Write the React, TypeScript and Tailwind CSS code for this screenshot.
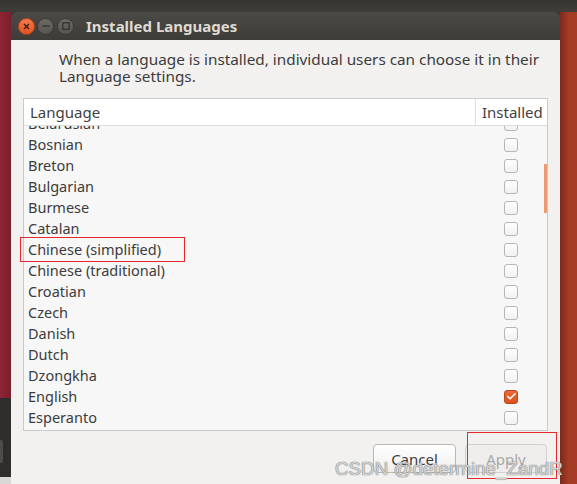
import { Check } from 'lucide-react'

const LANGUAGES: { name: string; installed: boolean }[] = [
  { name: 'Belarusian', installed: false },
  { name: 'Bosnian', installed: false },
  { name: 'Breton', installed: false },
  { name: 'Bulgarian', installed: false },
  { name: 'Burmese', installed: false },
  { name: 'Catalan', installed: false },
  { name: 'Chinese (simplified)', installed: false },
  { name: 'Chinese (traditional)', installed: false },
  { name: 'Croatian', installed: false },
  { name: 'Czech', installed: false },
  { name: 'Danish', installed: false },
  { name: 'Dutch', installed: false },
  { name: 'Dzongkha', installed: false },
  { name: 'English', installed: true },
  { name: 'Esperanto', installed: false },
  { name: 'Estonian', installed: false },
]

function CheckBox({ checked }: { checked: boolean }) {
  if (checked) {
    return (
      <span className="flex h-[14px] w-[14px] items-center justify-center rounded-[3px] border border-[#b9471c] bg-gradient-to-b from-[#ec6a37] to-[#d9511f]">
        <Check size={11} strokeWidth={3.5} className="text-white" />
      </span>
    )
  }
  return <span className="h-[14px] w-[14px] rounded-[3px] border border-[#b7b6b3] bg-gradient-to-b from-white to-[#f1f1f0]" />
}

function TitleButton({ kind }: { kind: 'close' | 'min' | 'max' }) {
  if (kind === 'close') {
    return (
      <span className="flex h-[17px] w-[17px] items-center justify-center rounded-full border border-[#b8431b] bg-gradient-to-b from-[#f47a4b] to-[#e0541f]">
        <svg width="7" height="7" viewBox="0 0 7 7">
          <path d="M1 1 L6 6 M6 1 L1 6" stroke="#3b1a0e" strokeWidth="1.3" />
        </svg>
      </span>
    )
  }
  return (
    <span className="flex h-[17px] w-[17px] items-center justify-center rounded-full border border-[#3a3935] bg-gradient-to-b from-[#6c6a65] to-[#57554f]">
      {kind === 'min' ? (
        <svg width="8" height="8" viewBox="0 0 8 8">
          <path d="M0.5 4 H7.5" stroke="#34332f" strokeWidth="1.4" />
        </svg>
      ) : (
        <svg width="8" height="8" viewBox="0 0 8 8">
          <rect x="0.8" y="0.8" width="6.4" height="6.4" fill="none" stroke="#34332f" strokeWidth="1.3" />
        </svg>
      )}
    </span>
  )
}

export default function App() {
  return (
    <div className="relative flex h-[484px] w-[577px] flex-col overflow-hidden bg-[#3b3a36] font-['Noto_Sans',sans-serif]">
      <div className="h-[12px] shrink-0 bg-gradient-to-b from-[#35342f] to-[#403e3a]" />
      <div className="flex flex-1">
        {/* desktop at the left */}
        <div className="flex w-[11px] shrink-0 flex-col">
          <div className="h-[386px] bg-gradient-to-r from-[#8e2536] to-[#7a1f2c]" />
          <div className="flex flex-1 flex-col bg-[#2e2d2b]">
            <div className="mt-[42px] h-[23px] w-[3px] rounded-r-[2px] bg-[#4d4c49]" />
            <div className="mt-auto h-[7px] bg-[#d9d8d6]" />
          </div>
        </div>

        {/* dialog window */}
        <div className="flex w-[549px] shrink-0 flex-col">
          <div className="flex h-[28px] shrink-0 items-center rounded-t-[7px] bg-gradient-to-b from-[#4c4a45] to-[#3e3c38] pl-[7px]">
            <div className="flex items-center gap-[2px]">
              <TitleButton kind="close" />
              <TitleButton kind="min" />
              <span className="ml-[1px]"><TitleButton kind="max" /></span>
            </div>
            <span className="ml-[12px] text-[15px] font-bold text-[#dfdbd2]">Installed Languages</span>
          </div>

          <div className="flex flex-1 flex-col bg-[#f2f1f0] px-[12px] pt-[11px]">
            <p className="pl-[36px] text-[15.3px] leading-[17px] text-[#3c3c3c]">
              When a language is installed, individual users can choose it in their
              <br />
              Language settings.
            </p>

            <div className="mt-[13px] flex h-[333px] flex-col border border-[#cbcac7] bg-[#f7f7f7]">
              <div className="flex h-[27px] shrink-0 border-b border-[#dddcda] bg-white text-[15px] text-[#3f3f3f]">
                <div className="flex flex-1 items-center pl-[6px]">Language</div>
                <div className="flex w-[72px] items-center border-l border-[#e0dfdd] pl-[6px]">Installed</div>
              </div>
              <div className="relative flex-1 overflow-hidden">
                <div className="-mt-[13px]">
                  {LANGUAGES.map((l) => (
                    <div key={l.name} className="flex h-[21px] items-center text-[14.5px] text-[#3c3c3c]">
                      <div className="flex-1 pl-[4px]">{l.name}</div>
                      <div className="flex w-[72px] justify-center">
                        <CheckBox checked={l.installed} />
                      </div>
                    </div>
                  ))}
                </div>
                <div className="absolute right-0 top-[38px] h-[49px] w-[3px] bg-[#ef9874]" />
              </div>
            </div>

            <div className="mt-[13px] flex justify-end gap-[9px] pr-[1px]">
              <button className="h-[29px] w-[83px] rounded-[4px] border border-[#b9b8b5] bg-gradient-to-b from-white to-[#f0efee] text-[15px] leading-[20px] text-[#3c3c3c]">
                Cancel
              </button>
              <button className="h-[29px] w-[82px] rounded-[4px] border border-[#d3d2cf] bg-[#efeeed] text-[15px] leading-[20px] text-[#a9a8a5]">
                Apply
              </button>
            </div>
          </div>
        </div>

        {/* desktop at the right */}
        <div className="flex-1 bg-gradient-to-r from-[#7c2a1b] via-[#a53c26] to-[#a83d27]" />
      </div>

      {/* annotations */}
      <div className="absolute left-[20px] top-[237px] h-[25px] w-[165px] border border-[#e8262d]" />
      <div className="absolute left-[467px] top-[432px] h-[47px] w-[90px] border border-[#e8262d]" />
      <div className="pointer-events-none absolute left-[335px] top-[459px] font-['Liberation_Sans',sans-serif] text-[18.8px] leading-[20px] text-[#f4f4f4]/75 [text-shadow:0_0_1px_#6e6e6e,0_0_1px_#6e6e6e]">
        CSDN @determine_ZandR
      </div>
    </div>
  )
}
